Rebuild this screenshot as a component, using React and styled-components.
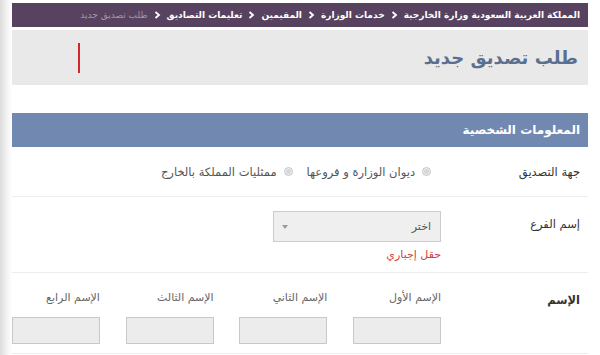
import React from 'react';
import styled, { createGlobalStyle } from 'styled-components';

const GlobalStyle = createGlobalStyle`
    html, body {
        margin: 0;
        padding: 0;
        background: #ffffff;
    }
    body {
        font-family: "DejaVu Sans", "Noto Sans", sans-serif;
    }
`;

const Page = styled.div`
    direction: rtl;
    width: 600px;
    height: 355px;
    overflow: hidden;
    padding: 3px 12px 0 12px;
    box-sizing: border-box;
    background: linear-gradient(to right, #dcdcdc 0px, #f3f3f3 7px, #ffffff 12px);
    font-family: "DejaVu Sans", sans-serif;
`;

const Breadcrumb = styled.div`
    display: flex;
    align-items: center;
    gap: 6px;
    height: 24px;
    padding: 0 8px;
    background: #574360;
    color: #ffffff;
    font-size: 9px;
    font-weight: bold;
    white-space: nowrap;
`;

const Crumb = styled.span`
    color: ${p => (p.current ? '#a896ac' : '#ffffff')};
    font-weight: ${p => (p.current ? 'normal' : 'bold')};
`;

const Chevron = styled.svg`
    width: 7px;
    height: 8px;
    flex-shrink: 0;
`;

const TitleBox = styled.div`
    display: flex;
    align-items: center;
    justify-content: space-between;
    height: 55px;
    margin-top: 3px;
    padding: 0 10px 0 66px;
    background: #e9e9e9;
`;

const Title = styled.h1`
    margin: 0;
    font-size: 18px;
    font-weight: bold;
    color: #5b6f8f;
`;

const Cursor = styled.div`
    width: 2px;
    height: 30px;
    background: #d3262b;
`;

const SectionHead = styled.div`
    display: flex;
    align-items: center;
    height: 34px;
    margin-top: 28px;
    padding: 0 8px;
    background: #7189b1;
    color: #ffffff;
    font-size: 12px;
    font-weight: bold;
`;

const Row = styled.div`
    display: flex;
    align-items: ${p => p.align || 'center'};
    height: ${p => p.h}px;
    border-bottom: 1px solid #ededed;
    box-sizing: border-box;
`;

const Label = styled.div`
    width: 147px;
    flex-shrink: 0;
    box-sizing: border-box;
    padding-right: 8px;
    padding-top: ${p => p.top || 0}px;
    font-size: 11.5px;
    color: #333333;
    font-weight: ${p => (p.bold ? 'bold' : 'normal')};
`;

const RadioGroup = styled.div`
    display: flex;
    align-items: center;
    gap: 14px;
    padding-right: 10px;
    font-size: 11.5px;
    color: #555555;
`;

const RadioItem = styled.label`
    display: flex;
    align-items: center;
    gap: 7px;
`;

const RadioDot = styled.span`
    width: 9px;
    height: 9px;
    border-radius: 50%;
    box-sizing: border-box;
    border: 1px solid #c4c4c4;
    background: radial-gradient(circle, #d6d6d6 0 2px, #efefef 3px);
`;

const FieldCol = styled.div`
    display: flex;
    flex-direction: column;
    align-items: flex-start;
    padding-top: ${p => p.top || 0}px;
`;

const Select = styled.div`
    display: flex;
    align-items: center;
    justify-content: space-between;
    width: 168px;
    height: 31px;
    box-sizing: border-box;
    padding: 0 9px 0 8px;
    border: 1px solid #cccccc;
    background: #efefef;
    font-size: 11px;
    color: #555555;
`;

const Caret = styled.span`
    width: 0;
    height: 0;
    border-left: 3px solid transparent;
    border-right: 3px solid transparent;
    border-top: 4px solid #9a9a9a;
`;

const ErrorText = styled.div`
    margin-top: 6px;
    font-size: 11px;
    color: #d33b3b;
`;

const NameGrid = styled.div`
    display: grid;
    grid-template-columns: repeat(4, 88px);
    column-gap: 25.7px;
    padding-top: 18px;
`;

const NameField = styled.div`
    display: flex;
    flex-direction: column;
    align-items: flex-start;
`;

const SubLabel = styled.div`
    font-size: 11px;
    color: #666666;
    height: 17px;
`;

const TextBox = styled.div`
    width: 88px;
    height: 27px;
    margin-top: 9px;
    box-sizing: border-box;
    border: 1px solid #c8c8c8;
    background: #ececec;
`;

const crumbs = [
    'المملكة العربية السعودية وزارة الخارجية',
    'خدمات الوزارة',
    'المقيمين',
    'تعليمات التصاديق',
];

const names = ['الإسم الأول', 'الإسم الثاني', 'الإسم الثالث', 'الإسم الرابع'];

const Sep = () => (
    <Chevron viewBox="0 0 7 8">
        <path d="M1.5 1 L5 4 L1.5 7" fill="none" stroke="#ffffff" strokeWidth="1.8" />
    </Chevron>
);

export default function App() {
    return (
        <Page>
            <GlobalStyle />
            <Breadcrumb>
                {crumbs.map(c => (
                    <React.Fragment key={c}>
                        <Crumb>{c}</Crumb>
                        <Sep />
                    </React.Fragment>
                ))}
                <Crumb current>طلب تصديق جديد</Crumb>
            </Breadcrumb>

            <TitleBox>
                <Title>طلب تصديق جديد</Title>
                <Cursor />
            </TitleBox>

            <SectionHead>المعلومات الشخصية</SectionHead>

            <Row h={50}>
                <Label>جهة التصديق</Label>
                <RadioGroup>
                    <RadioItem><RadioDot />ديوان الوزارة و فروعها</RadioItem>
                    <RadioItem><RadioDot />ممثليات المملكة بالخارج</RadioItem>
                </RadioGroup>
            </Row>

            <Row h={76} align="flex-start">
                <Label top={20}>إسم الفرع</Label>
                <FieldCol top={14}>
                    <Select>
                        <span>اختر</span>
                        <Caret />
                    </Select>
                    <ErrorText>حقل إجباري</ErrorText>
                </FieldCol>
            </Row>

            <Row h={81} align="flex-start">
                <Label top={20} bold>الإسم</Label>
                <NameGrid>
                    {names.map(n => (
                        <NameField key={n}>
                            <SubLabel>{n}</SubLabel>
                            <TextBox />
                        </NameField>
                    ))}
                </NameGrid>
            </Row>
        </Page>
    );
}
